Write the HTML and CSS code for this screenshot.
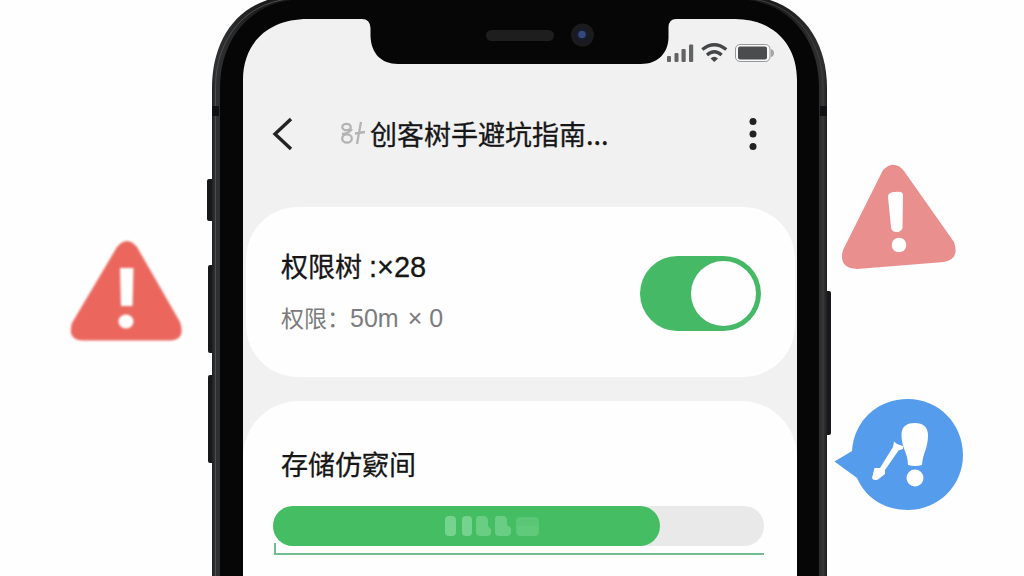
FILE: index.html
```html
<!DOCTYPE html>
<html lang="zh-CN">
<head>
<meta charset="utf-8">
<title>创客树手避坑指南</title>
<link rel="stylesheet" href="styles.css">
</head>
<body>
<main class="stage">
  <section class="phone">
    <svg class="phone-frame" viewBox="206 0 626 576" width="626" height="576" aria-hidden="true">
      <defs>
        <linearGradient id="rim" gradientUnits="userSpaceOnUse" x1="212" x2="827" y1="0" y2="0">
          <stop offset="0" stop-color="#202122"/><stop offset=".005" stop-color="#303132"/><stop offset=".08" stop-color="#1b1b1c"/><stop offset=".92" stop-color="#1b1b1c"/><stop offset=".995" stop-color="#303031"/><stop offset="1" stop-color="#202020"/>
        </linearGradient>
      </defs>
      <path fill="#171819" d="M207 181q0-2 2-2h4v42h-4q-2 0-2-2zM208 267q0-2 2-2h4v88h-4q-2 0-2-2zM208 377q0-2 2-2h4v88h-4q-2 0-2-2zM826 291h3q2 0 2 2v140q0 2-2 2h-3z"/>
      <path fill="url(#rim)" d="M212 580V88C212 35 242-5 300-5H737C795-5 827 35 827 88V580Z"/>
      <path fill="none" stroke="#4b4d4e" stroke-width="1" d="M215.500 580V88C215.500 38 246-2 302-2"/>
      <path fill="none" stroke="#3e3f40" stroke-width="1" d="M823 580V88C823 38 792-2 738-2"/>
      <path fill="#060606" d="M220 580V88C220 40 250-1 306-1H734C790-1 819 40 819 88V580Z"/>
      <path fill="#101112" d="M212 106h7v10h-7zM820 106h7v10h-7z"/>
      <path fill="#f1f1f2" d="M243 580V80C243 43 268 19 308 19H362Q370 19 370.500 28V36C371 53 381 64 398 64H641C658 64 668 53 668.500 38V27Q669 19 676 19H735C773 19 797 44 797 80V580Z"/>
      <rect x="486" y="30" width="68" height="11" rx="5.500" fill="#1e1e1f"/>
      <circle cx="582.500" cy="35" r="11.500" fill="#1b1b1d"/>
      <circle cx="582.500" cy="35" r="7" fill="#181b28"/>
      <circle cx="582" cy="34.500" r="3.800" fill="#34477e"/>
    </svg>
    <div class="screen">
      <div class="status">
        <svg width="108" height="20" viewBox="666 43 108 20" aria-hidden="true">
          <g fill="#626364"><rect x="667" y="56" width="4" height="6" rx="1"/><rect x="674.500" y="53" width="4" height="9" rx="1"/><rect x="681.500" y="49" width="4.200" height="13" rx="1"/><rect x="689" y="44.500" width="4.200" height="17.500" rx="1"/></g>
          <g fill="none" stroke="#454647" stroke-width="3.300"><path d="M702.300 49.500Q714.300 40 726.300 49.500"/><path d="M707 55Q714.300 48.500 721.600 55"/></g>
          <path fill="#454647" d="M710.500 58.500Q714.300 55 718 58.500L714.300 62Z"/>
          <rect x="735.500" y="44.500" width="34.500" height="17" rx="4.500" fill="#f8f8f8" stroke="#96989a"/>
          <rect x="738" y="46.500" width="29" height="13" rx="2" fill="#4b4c4d"/>
          <path fill="#a3a4a5" d="M771 49q3 1 3 4t-3 4z"/>
        </svg>
      </div>
      <header class="nav">
        <svg class="back" width="22" height="34" viewBox="0 0 22 34" aria-label="返回"><path d="M19 2 3 17 19 32" fill="none" stroke="#232323" stroke-width="3.400"/></svg>
        <svg class="mark" width="28" height="28" viewBox="340 120 28 28" aria-hidden="true"><g fill="none" stroke="#b4b4b4" stroke-width="2.300"><ellipse cx="346.500" cy="127" rx="4.200" ry="3.200"/><ellipse cx="347" cy="138.500" rx="4.800" ry="4.200"/><path d="M342 134Q348 134 352 129M355 133.500 365 132M361 122 357 144"/></g></svg>
        <h1 class="title">创客树手避坑指南...</h1>
        <svg class="more" width="8" height="34" viewBox="0 0 8 34" aria-label="更多"><g fill="#222"><circle cx="4" cy="4.500" r="3.500"/><circle cx="4" cy="17" r="3.500"/><circle cx="4" cy="29.500" r="3.500"/></g></svg>
      </header>
      <section class="card permission">
        <div class="copy">
          <h2 class="heading">权限树<span class="count">:×28</span></h2>
          <p class="detail">权限：<span class="amount">50m</span><span class="times">×</span><span class="zero">0</span></p>
        </div>
        <div class="toggle"><div class="knob"></div></div>
      </section>
      <section class="card storage">
        <h2 class="heading">存储仿窽间</h2>
        <div class="track">
          <div class="fill">
            <svg width="96" height="22" viewBox="444 515 96 22" aria-hidden="true"><g fill="#75d38d"><rect x="445" y="516" width="11" height="20" rx="4"/><rect x="462" y="516" width="10" height="20" rx="4"/><path d="M479 516h5q4 0 4 5v5l3 3v4q0 3-4 3h-7q-4 0-4-4v-13q0-3 3-3z" opacity=".75"/><path d="M498 516h5q4 0 4 5v4l4 3v4q0 4-4 4h-8q-4 0-4-4v-13q0-3 3-3z" opacity=".75"/><rect x="516" y="517" width="23" height="19" rx="4" opacity=".45"/><path d="M517 526h21v6q0 4-4 4h-13q-4 0-4-4z" opacity=".25"/></g></svg>
          </div>
        </div>
        <div class="rule"></div>
      </section>
    </div>
  </section>

  <svg class="sign sign-left" viewBox="68 238 116 106" width="116" height="106" aria-hidden="true">
    <path fill="#eb675e" d="M117 247Q127 235 137 247L180 322Q186 340 170 340.500H83Q67 340 72 323Z"/>
    <path fill="#fff" d="M120 268H133.500L132.500 306H121Z"/><ellipse cx="126" cy="321.500" rx="7.500" ry="7" fill="#fff"/>
  </svg>
  <svg class="sign sign-right" viewBox="840 162 118 110" width="118" height="110" aria-hidden="true">
    <path fill="#e98f8d" d="M883 170Q894 159 904 171L954 242Q960 259 944 262L857 269Q838 268 843 250Z"/>
    <path fill="#fff" d="M888 197Q888 192 895 192Q903 191 903 195L902.500 228Q901 232 897 232Q891 232 891 227Z"/><circle cx="899" cy="245" r="7.300" fill="#fff"/>
  </svg>
  <svg class="sign sign-tip" viewBox="832 397 134 116" width="134" height="116" aria-hidden="true">
    <path fill="#559cec" d="M834.500 461.500 852 451C854 421 877 399 908 399C939 399 963 424 963 455C963 486 938 510 908 510C882 510 865 496 857 478Z"/>
    <path fill="#fff" d="M901.500 435C901.500 426 907 423 915 423C923 423 928 427 928 435C928 449 923 452 922 465Q915 467 908 465C908 453 901.500 448 901.500 435Z"/>
    <circle cx="915" cy="478" r="8.500" fill="#fff"/>
    <path fill="#fff" d="M894 441.500 897 444 903 446V449L898.500 450.500 885 470V474L878 479.500Q873 481 872 478L874.500 468H880L893 447Z"/>
  </svg>
</main>
</body>
</html>
```

FILE: styles.css
```css
* { box-sizing: border-box; }
body { margin: 0; background: #fefefe; font-family: "Noto Sans CJK SC", sans-serif; color: #161616; }
h1, h2, p { margin: 0; font-weight: 400; white-space: nowrap; }
svg { display: block; flex: none; }
.stage { position: relative; width: 1024px; height: 576px; overflow: hidden; }
.phone { position: relative; width: 626px; height: 576px; margin-left: 206px; padding: 0 35px 0 37px; overflow: hidden; }
.phone-frame { position: absolute; inset: 0; }
.screen { position: relative; height: 576px; }
.status { display: flex; justify-content: flex-end; height: 91px; padding: 43px 23px 0 0; }
.nav { display: flex; align-items: center; height: 86px; padding: 0 40px 0 29px; }
.mark { margin-left: 46px; }
.title { flex: 1; margin-left: 2px; font-size: 27px; line-height: 40px; -webkit-text-stroke: .3px; }
.card { background: #fefefe; }
.permission { display: flex; justify-content: space-between; height: 170px; margin: 30px 2px 0 3px; padding: 39px 34px 0 35px; border-radius: 52px; }
.heading { font-size: 27px; line-height: 40px; -webkit-text-stroke: .3px; }
.count { margin-left: 7px; font-family: "Liberation Sans", sans-serif; font-size: 29px; line-height: 1; }
.detail { margin-top: 13px; color: #7c7c7c; font-size: 23px; line-height: 36px; }
.amount, .times, .zero { font-family: "Liberation Sans", sans-serif; font-size: 25px; line-height: 1; }
.times { margin: 0 7px 0 9px; }
.toggle { display: flex; justify-content: flex-end; align-items: center; width: 121px; height: 75px; margin-top: 10px; padding-right: 5px; border-radius: 38px; background: #45b965; }
.knob { width: 65px; height: 65px; border-radius: 50%; background: #fefefe; }
.storage { height: 200px; margin-top: 24px; padding: 43px 33px 0 38px; border-radius: 56px 56px 0 0; }
.track { width: 491px; height: 40px; margin: 22px 0 0 -8px; border-radius: 20px; background: #e9e9e9; }
.fill { display: flex; justify-content: flex-end; align-items: center; width: 387px; height: 40px; padding-right: 120px; border-radius: 20px; background: #44bd63; }
.rule { width: 490px; height: 12px; margin: -3px 0 0 -7px; border: solid #72bd91; border-width: 0 0 2px 2px; }
.sign { position: absolute; }
.sign-left { left: 68px; top: 238px; filter: blur(.8px); }
.sign-right { left: 840px; top: 162px; }
.sign-tip { left: 832px; top: 397px; }
```
